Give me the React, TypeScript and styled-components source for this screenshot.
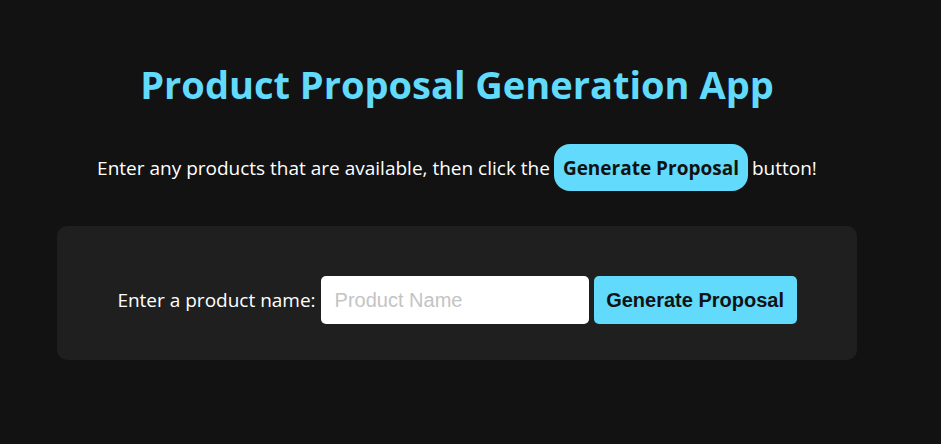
import React, { useState } from "react";
import styled, { createGlobalStyle } from "styled-components";

const GlobalStyle = createGlobalStyle`
  html, body {
    margin: 0;
    padding: 0;
    background-color: #121212;
  }
  body {
    font-family: "Open Sans", "Noto Sans", sans-serif;
    color: #ffffff;
  }
`;

const App: React.FC = () => {
  const [productName, setProductName] = useState<string>("");

  return (
    <>
      <GlobalStyle />
      <Wrapper>
        <Title>Product Proposal Generation App</Title>
        <Instructions>
          Enter any products that are available, then click the
          <InlineBadge>Generate Proposal</InlineBadge>
          button!
        </Instructions>
        <Card>
          <FormRow>
            <Label htmlFor="product">Enter a product name:</Label>
            <Input
              id="product"
              type="text"
              placeholder="Product Name"
              value={productName}
              onChange={(e) => setProductName(e.target.value)}
            />
            <GenerateButton type="button">Generate Proposal</GenerateButton>
          </FormRow>
        </Card>
      </Wrapper>
    </>
  );
};

const Wrapper = styled.div`
  width: 914px;
  height: 444px;
  display: flex;
  flex-direction: column;
  align-items: center;
  box-sizing: border-box;
  padding-top: 60px;
`;

const Title = styled.h1`
  margin: 0;
  font-size: 38px;
  font-weight: 700;
  line-height: 48px;
  color: #61dafb;
`;

const Instructions = styled.p`
  margin: 36px 0 0;
  display: flex;
  align-items: center;
  gap: 4px;
  font-size: 19px;
  color: #ffffff;
`;

const InlineBadge = styled.span`
  display: inline-flex;
  align-items: center;
  height: 47px;
  padding: 0 9px;
  border-radius: 16px;
  background-color: #61dafb;
  color: #121212;
  font-weight: 700;
`;

const Card = styled.div`
  margin-top: 35px;
  width: 800px;
  box-sizing: border-box;
  padding: 50px 0 36px;
  background-color: #1f1f1f;
  border-radius: 10px;
`;

const FormRow = styled.div`
  display: flex;
  justify-content: center;
  align-items: center;
  gap: 5px;
`;

const Label = styled.label`
  font-size: 19px;
  color: #ffffff;
`;

const Input = styled.input`
  width: 268px;
  height: 48px;
  box-sizing: border-box;
  padding: 0 14px;
  border: none;
  border-radius: 5px;
  background-color: #ffffff;
  font-family: "Liberation Sans", Arial, sans-serif;
  font-size: 20px;
  color: #121212;
  outline: none;

  &::placeholder {
    color: #c4c4c4;
  }
`;

const GenerateButton = styled.button`
  width: 203px;
  height: 48px;
  border: none;
  border-radius: 5px;
  background-color: #61dafb;
  font-family: "Liberation Sans", Arial, sans-serif;
  font-size: 20px;
  font-weight: 700;
  color: #121212;
  cursor: pointer;
`;

export default App;
